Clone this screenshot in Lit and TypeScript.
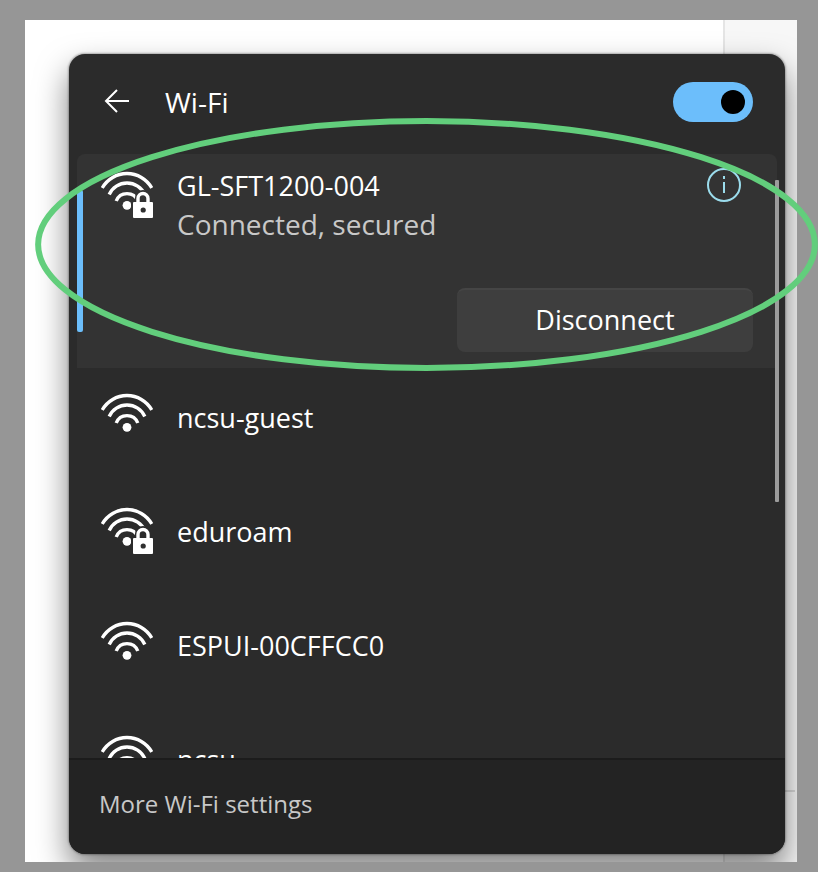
import { LitElement, html, css, svg, nothing } from "lit";
import { customElement, property, state } from "lit/decorators.js";

interface Network {
  name: string;
  secured: boolean;
}

@customElement("wifi-icon")
class WifiIcon extends LitElement {
  @property({ type: Boolean }) secured = false;

  static styles = css`
    :host { display: block; flex: none; width: 52px; height: 48px; }
    .icon { display: block; width: 100%; height: 100%; }
    .arc { fill: none; stroke: #fff; stroke-width: 3.4; }
    .solid { fill: #fff; }
    .hole { fill: #2f2f2f; }
  `;

  render() {
    return html`
      <svg class="icon" viewBox="0 0 52 48" aria-hidden="true">
        <mask id="cut" maskUnits="userSpaceOnUse" x="0" y="0" width="52" height="48">
          <rect width="52" height="48" fill="#fff"></rect>
          ${this.secured
            ? svg`<path d="M30 29H34V27A8 8 0 0 1 50 27V29H52V48H30Z" fill="#000"></path>`
            : nothing}
        </mask>
        <g mask="url(#cut)">
          <path class="arc" d="M1.2 17A28.5 28.5 0 0 1 50.8 17"></path>
          <path class="arc" d="M8.2 23.5A19.5 19.5 0 0 1 43.8 23.5"></path>
          <path class="arc" d="M15.2 30A11.6 11.6 0 0 1 36.8 30"></path>
          <circle class="solid" cx="26" cy="34.3" r="4.4"></circle>
        </g>
        ${this.secured
          ? svg`
              <path class="arc" d="M37 32V27.5A5 5 0 0 1 47 27.5V32"></path>
              <rect class="solid" x="32" y="31" width="20" height="16" rx="1"></rect>
              <circle class="hole" cx="42.2" cy="39" r="2.6"></circle>`
          : nothing}
      </svg>
    `;
  }
}

@customElement("app-root")
class AppRoot extends LitElement {
  @state() private enabled = true;

  private networks: Network[] = [
    { name: "ncsu-guest", secured: false },
    { name: "eduroam", secured: true },
    { name: "ESPUI-00CFFCC0", secured: false },
    { name: "ncsu", secured: false },
  ];

  static styles = css`
    :host {
      display: flex;
      position: relative;
      box-sizing: border-box;
      height: 100vh;
      padding: 20px 21px 10px 25px;
      background: #969696;
      color: #fff;
      font: 27px/34px "Open Sans", "Noto Sans", sans-serif;
      overflow: hidden;
    }
    button { font: inherit; color: inherit; border: 0; padding: 0; background: none; }
    .sheet {
      position: relative;
      flex: 1;
      min-width: 0;
      display: flex;
      padding: 34px 12px 8px 44px;
      background: #fff;
      overflow: hidden;
    }
    .aside {
      position: absolute;
      top: 0;
      right: 0;
      bottom: 0;
      box-sizing: border-box;
      width: 74px;
      border-left: 2px solid #e5e5e5;
      background: #f7f7f7;
    }
    .rule {
      position: absolute;
      right: 2px;
      bottom: 70px;
      width: 70px;
      border-top: 2px solid #d8d8d8;
    }
    .flyout {
      position: relative;
      flex: 1;
      min-width: 0;
      display: flex;
      flex-direction: column;
      border-radius: 16px;
      background: #2b2b2b;
      box-shadow: 0 0 2px 1px rgba(0, 0, 0, 0.28), 0 16px 32px rgba(0, 0, 0, 0.5);
    }
    .header {
      display: flex;
      align-items: center;
      flex: none;
      box-sizing: border-box;
      height: 100px;
      padding: 0 32px 4px 34px;
    }
    .back { width: 28px; height: 28px; margin-right: 34px; }
    .glyph { display: block; width: 100%; height: 100%; fill: none; stroke: currentColor; stroke-width: 2; }
    .title { flex: 1; margin: 0; font: inherit; font-size: 28px; }
    .switch {
      appearance: none;
      display: flex;
      align-items: center;
      box-sizing: border-box;
      width: 80px;
      height: 40px;
      margin: 0;
      padding: 0 8px;
      border-radius: 20px;
      background: #5a5a5a;
    }
    .switch:checked { justify-content: flex-end; background: #6cbefb; }
    .switch::before { content: ""; width: 24px; height: 24px; border-radius: 50%; background: #000; }
    .body { position: relative; flex: 1; min-height: 0; }
    .list {
      box-sizing: border-box;
      height: 100%;
      margin: 0;
      padding: 0 8px;
      list-style: none;
      overflow: hidden;
    }
    .current {
      position: relative;
      display: flex;
      flex-direction: column;
      box-sizing: border-box;
      min-height: 214px;
      padding: 17px 24px 16px;
      border-radius: 8px 8px 0 0;
      background: #333;
    }
    .accent {
      position: absolute;
      left: 0;
      top: 36px;
      bottom: 36px;
      width: 6px;
      border-radius: 2px;
      background: #6cbefb;
    }
    .summary { display: flex; flex: 1; gap: 24px; }
    .labels { flex: 1; min-width: 0; line-height: 39px; margin-top: -5px; }
    .labels p { margin: 0; }
    .labels .status { color: #c8c8c8; font-size: 28px; }
    .info { width: 36px; height: 36px; margin: -4px 11px 0 0; color: #9bdcec; }
    .disconnect {
      align-self: flex-end;
      width: 296px;
      height: 64px;
      padding-bottom: 3px;
      border-radius: 8px;
      border-top: 2px solid #454545;
      background: #3e3e3e;
    }
    .row {
      display: flex;
      align-items: flex-start;
      gap: 24px;
      box-sizing: border-box;
      height: 114px;
      padding: 25px 24px 0;
    }
    .name { padding-top: 8px; }
    .thumb {
      position: absolute;
      top: 26px;
      right: 6px;
      width: 4px;
      height: 322px;
      background: #9c9c9c;
      border-radius: 1px;
    }
    .footer {
      display: flex;
      align-items: center;
      flex: none;
      box-sizing: border-box;
      height: 96px;
      padding: 0 30px 6px;
      border-top: 2px solid #1c1c1c;
      border-radius: 0 0 16px 16px;
      background: #232323;
    }
    .more { color: #c8c8c8; font-size: 24px; text-decoration: none; }
    .marker {
      position: absolute;
      left: 35px;
      top: 118px;
      width: calc(100% - 35px);
      height: 253px;
      overflow: visible;
      pointer-events: none;
    }
    .ring { fill: none; stroke: #62ce7c; stroke-width: 6; }
  `;

  private toggle(e: Event) {
    this.enabled = (e.target as HTMLInputElement).checked;
  }

  render() {
    return html`
      <div class="sheet">
        <div class="aside"><div class="rule"></div></div>
        <section class="flyout">
          <header class="header">
            <button class="back" aria-label="Back">
              <svg class="glyph" viewBox="0 0 28 28"><path d="M14 2L3 13L14 24M3 13H26"></path></svg>
            </button>
            <h1 class="title"><label for="wifi">Wi-Fi</label></h1>
            <input id="wifi" class="switch" type="checkbox" role="switch"
              .checked=${this.enabled} @change=${this.toggle} />
          </header>
          <div class="body">
            <ul class="list">
              <li class="current">
                <span class="accent"></span>
                <div class="summary">
                  <wifi-icon secured></wifi-icon>
                  <div class="labels">
                    <p>GL-SFT1200-004</p>
                    <p class="status">Connected, secured</p>
                  </div>
                  <button class="info" aria-label="Properties">
                    <svg class="glyph" viewBox="0 0 36 36">
                      <circle cx="18" cy="18" r="16"></circle>
                      <path d="M18 15V26M18 9V12"></path>
                    </svg>
                  </button>
                </div>
                <button class="disconnect">Disconnect</button>
              </li>
              ${this.networks.map(
                (n) => html`
                  <li class="row">
                    <wifi-icon ?secured=${n.secured}></wifi-icon>
                    <span class="name">${n.name}</span>
                  </li>
                `
              )}
            </ul>
            <div class="thumb"></div>
          </div>
          <footer class="footer"><a class="more" href="#settings">More Wi-Fi settings</a></footer>
        </section>
      </div>
      <svg class="marker" aria-hidden="true">
        <ellipse class="ring" cx="50%" cy="50%" rx="49.6%" ry="48.8%"></ellipse>
      </svg>
    `;
  }
}
